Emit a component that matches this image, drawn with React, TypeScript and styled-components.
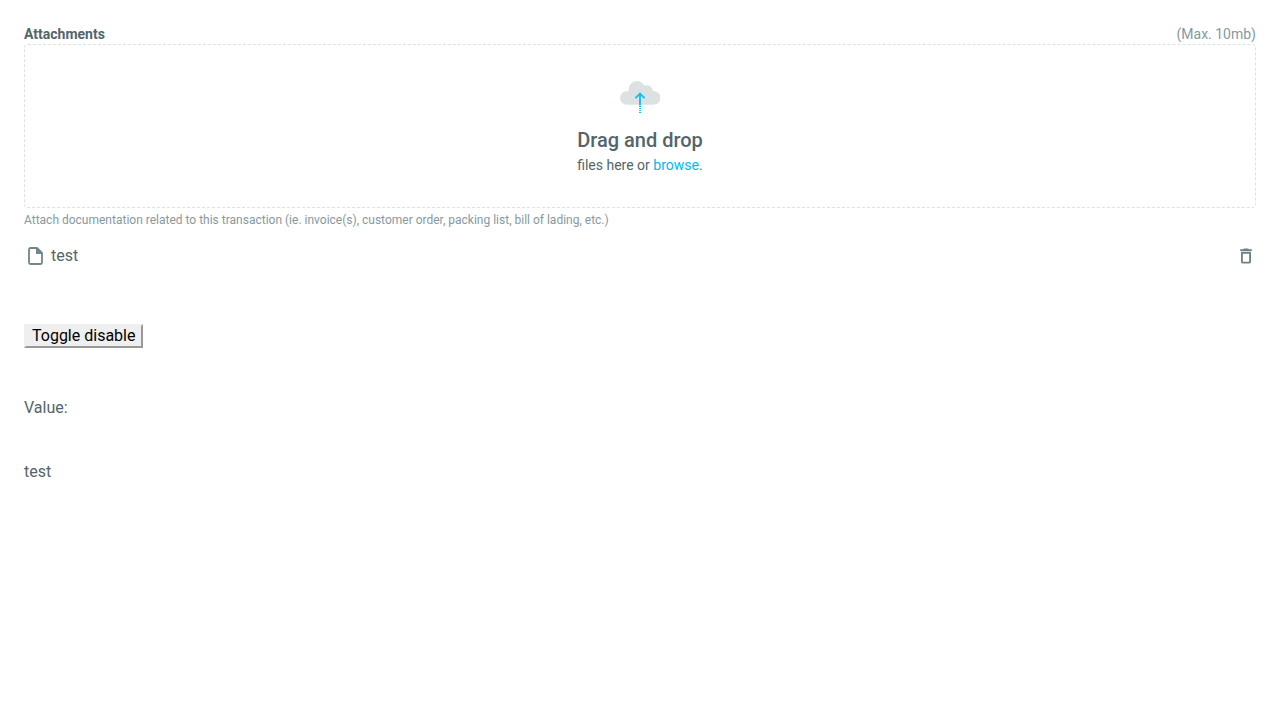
import React, { useRef, useState } from 'react';
import styled, { createGlobalStyle } from 'styled-components';

const GlobalStyle = createGlobalStyle`
  *, *::before, *::after { box-sizing: border-box; }
  body {
    margin: 0;
    background: #fff;
    color: #546569;
    font-family: Roboto, "Liberation Sans", sans-serif;
    font-size: 16px;
    line-height: 24px;
  }
`;

const Page = styled.main`
  padding: 24px;
`;

const Header = styled.div`
  display: flex;
  justify-content: space-between;
  font-size: 14px;
  line-height: 20px;
`;

const Label = styled.label`
  font-weight: 700;
`;

const Limit = styled.span`
  color: #87999d;
`;

const DropZone = styled.div`
  display: flex;
  flex-direction: column;
  align-items: center;
  padding: 32px;
  border: 1px dashed #dce2e2;
  border-radius: 4px;
`;

const CloudIcon = styled.svg`
  display: block;
  width: 40px;
  height: 40px;
`;

const DropText = styled.div`
  margin-top: 8px;
  font-size: 14px;
  line-height: 20px;
`;

const DropTitle = styled.div`
  font-size: 20px;
  line-height: 30px;
  font-weight: 500;
`;

const BrowseLink = styled.a`
  color: #00bbee;
  text-decoration: none;
`;

const HiddenInput = styled.input`
  display: none;
`;

const Hint = styled.div`
  margin-top: 4px;
  color: #87999d;
  font-size: 12px;
  line-height: 16px;
`;

const FileRows = styled.ul`
  margin: 16px 0 0;
  padding: 0;
  list-style: none;
`;

const FileRow = styled.li`
  display: flex;
  align-items: center;
  height: 24px;
`;

const FileIcon = styled.svg`
  width: 24px;
  height: 24px;
  margin-right: 3px;
`;

const FileName = styled.span`
  flex: 1;
`;

const DeleteButton = styled.button`
  display: flex;
  padding: 0;
  border: 0;
  background: none;
  color: #6d8187;
  cursor: pointer;
`;

const ToggleButton = styled.button`
  display: block;
  margin: 56px 0 0;
  padding: 0 6px;
  border: 2px solid;
  border-color: #efefef #999 #999 #efefef;
  background: #efefef;
  color: #000;
  font: inherit;
  line-height: 20px;
`;

const ValueLabel = styled.div`
  margin-top: 48px;
`;

const Value = styled.div`
  margin-top: 40px;
`;

export default function App() {
  const [files, setFiles] = useState<string[]>(['test']);
  const [disabled, setDisabled] = useState(false);
  const input = useRef<HTMLInputElement>(null);

  const addFiles = (list: FileList | null) => {
    if (list && !disabled) setFiles([...files, ...Array.from(list, (f) => f.name)]);
  };

  return (
    <Page>
      <GlobalStyle />
      <Header>
        <Label htmlFor="attachments">Attachments</Label>
        <Limit>(Max. 10mb)</Limit>
      </Header>
      <DropZone
        onDragOver={(e) => e.preventDefault()}
        onDrop={(e) => {
          e.preventDefault();
          addFiles(e.dataTransfer.files);
        }}
      >
        <CloudIcon viewBox="0 0 40 40" aria-hidden="true">
          <path
            fill="#dce2e2"
            d="M6.800 27.800a6.800 6.800 0 0 1 0-13.600c.7 0 1.400.1 2 .3A8.400 8.400 0 0 1 24.500 8.800a6 6 0 0 1 8.400 5.400c.4-.1.8-.1 1.200-.1a6.800 6.800 0 0 1-.9 13.700z"
          />
          <path fill="none" stroke="#18bfeb" strokeWidth="1.900" d="M20 28V16.800M15.400 21.200L20 16.600l4.600 4.600" />
          <path fill="#18bfeb" d="M19 28.500h2v1.500h-2zM19 31h2v1h-2zM19 33h2v1h-2zM19 35h2v1h-2z" />
        </CloudIcon>
        <DropText>
          <DropTitle>Drag and drop</DropTitle>
          files here or{' '}
          <BrowseLink
            href="#browse"
            onClick={(e) => {
              e.preventDefault();
              input.current?.click();
            }}
          >
            browse
          </BrowseLink>
          .
          <HiddenInput
            ref={input}
            id="attachments"
            type="file"
            multiple
            disabled={disabled}
            onChange={(e) => addFiles(e.target.files)}
          />
        </DropText>
      </DropZone>
      <Hint>
        Attach documentation related to this transaction (ie. invoice(s), customer order, packing list, bill of
        lading, etc.)
      </Hint>
      <FileRows>
        {files.map((name, i) => (
          <FileRow key={i}>
            <FileIcon viewBox="0 0 24 24" aria-hidden="true">
              <path
                fill="none"
                stroke="#73868b"
                strokeWidth="1.800"
                strokeLinejoin="round"
                d="M13 4H6.500Q5 4 5 5.500V18.500Q5 20 6.500 20H16.500Q18 20 18 18.500V9z"
              />
              <path fill="#73868b" d="M12 4h1l5 5v1h-6z" />
            </FileIcon>
            <FileName>{name}</FileName>
            <DeleteButton
              type="button"
              aria-label="Delete file"
              disabled={disabled}
              onClick={() => setFiles(files.filter((_, n) => n !== i))}
            >
              <svg width="20" height="20" viewBox="0 0 24 24" fill="currentColor" aria-hidden="true">
                <path d="M6 19c0 1.100.9 2 2 2h8c1.100 0 2-.9 2-2V7H6v12zM8.200 9.200h7.600v9.600H8.200zM15.500 4l-1-1h-5l-1 1H5v2h14V4h-3.500z" fillRule="evenodd" />
              </svg>
            </DeleteButton>
          </FileRow>
        ))}
      </FileRows>
      <ToggleButton type="button" onClick={() => setDisabled(!disabled)}>
        Toggle disable
      </ToggleButton>
      <ValueLabel>Value:</ValueLabel>
      <Value>{files.join(', ')}</Value>
    </Page>
  );
}
